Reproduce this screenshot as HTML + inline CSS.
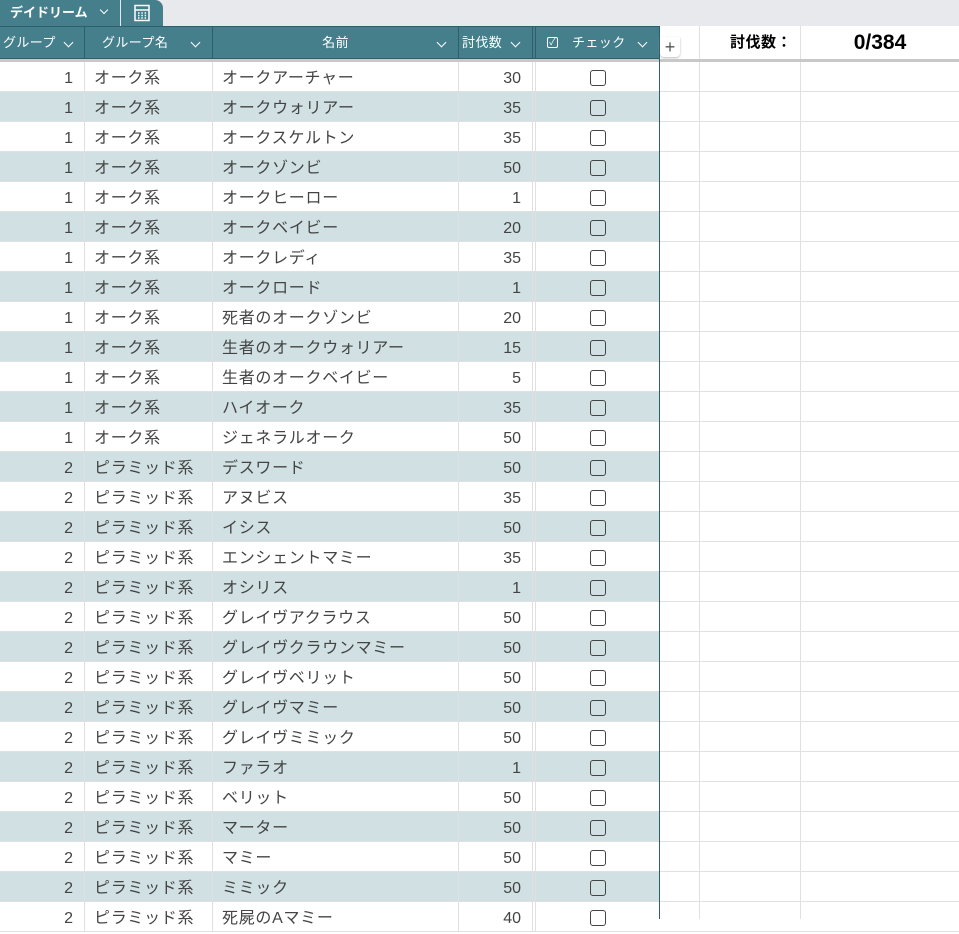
<!DOCTYPE html>
<html><head><meta charset="utf-8"><style>
*{margin:0;padding:0;box-sizing:border-box}
body{width:959px;height:919px;overflow:hidden;background:#fff;font-family:"Liberation Sans","Noto Sans CJK JP",sans-serif;position:relative}
.tabbar{position:absolute;left:0;top:0;width:959px;height:26px;background:#e8e9ed}
.tab{position:absolute;top:0;height:26px;background:#447f8b;color:#fff;font-size:13px;font-weight:bold;line-height:26px}
.hdr{position:absolute;top:26px;left:0;width:660px;height:33px;background:#457f8b;border-top:1px solid #2f5f6a;border-bottom:1px solid #2f5f6a}
.h{position:absolute;top:0;height:31px;line-height:31px;color:#fff;font-size:13px;border-right:1px solid #2f5f6a;letter-spacing:0.4px}
.chev{position:absolute;top:12px;width:7px;height:7px;border-right:1.6px solid #fff;border-bottom:1.6px solid #fff;transform:rotate(45deg)}
.sep{position:absolute;top:59px;left:0;width:959px;height:3px;background:#c8c8c8}
.row{position:absolute;left:0;width:660px;height:30px;border-bottom:1px solid #e0e0e0}
.row.alt{background:#d0e0e3}
.c{position:absolute;top:0;height:30px;padding-top:2px;line-height:30px;font-size:16px;color:#444;border-right:1px solid #e0e0e0;letter-spacing:0.7px;white-space:nowrap}
.n{letter-spacing:0}
.cb{position:absolute;left:590px;top:8px;width:16px;height:16px;border:1.8px solid #444;border-radius:3px}
.grid{position:absolute;left:660px;width:299px;height:30px;border-bottom:1px solid #e0e0e0}
</style></head><body>
<div class="tabbar"></div>
<div class="tab" style="left:0;width:120px;padding-left:10px">デイドリーム<span class="chev" style="left:101px;top:7px;width:6px;height:6px"></span></div>
<div class="tab" style="left:121px;width:42px;border-radius:0 8px 0 0">
<svg width="18" height="18" viewBox="0 0 18 18" style="position:absolute;left:12px;top:4px" fill="none" stroke="#fff" stroke-width="1.5"><rect x="2" y="1.5" width="14" height="15"/><line x1="2" y1="6" x2="16" y2="6"/><path d="M5 9h1.5M8.3 9h1.5M11.6 9h1.5M5 11.5h1.5M8.3 11.5h1.5M11.6 11.5h1.5M5 14h1.5M8.3 14h1.5M11.6 14h1.5"/></svg></div>
<div class="hdr">
<div class="h" style="left:0;width:85px;padding-left:3px">グループ<span class="chev" style="left:65px"></span></div>
<div class="h" style="left:85px;width:128px;padding-left:17px">グループ名<span class="chev" style="left:107px"></span></div>
<div class="h" style="left:213px;width:246px;text-align:center">名前<span class="chev" style="left:225px"></span></div>
<div class="h" style="left:459px;width:74px;padding-left:3px">討伐数<span class="chev" style="left:53px"></span></div>
<div class="h" style="left:533px;width:3px"></div>
<div class="h" style="left:536px;width:124px;padding-left:36px;border-right:none"><span style="position:absolute;left:11px;top:10px;width:11px;height:11px;border:1.3px solid #fff;border-radius:2px;font-size:9px;line-height:8px;text-align:center">✓</span>チェック<span class="chev" style="left:103px"></span></div>
</div>
<div style="position:absolute;left:660px;top:37px;width:20px;height:20px;background:#fff;border-radius:0 0 4px 4px;box-shadow:0 1px 2px #bbb;text-align:center;font-size:18px;line-height:20px;color:#555">+</div>
<div style="position:absolute;left:699px;top:26px;width:1px;height:893px;background:#e0e0e0"></div>
<div style="position:absolute;left:800px;top:26px;width:1px;height:893px;background:#e0e0e0"></div>
<div style="position:absolute;left:700px;top:26px;width:100px;height:33px;line-height:33px;text-align:right;padding-right:8px;font-size:15px;font-weight:bold;letter-spacing:0.5px">討伐数：</div>
<div style="position:absolute;left:801px;top:26px;width:158px;height:33px;line-height:33px;text-align:center;font-size:21px;font-weight:bold">0/384</div>
<div class="sep"></div>
<div id="rows"></div>
<div style="position:absolute;left:659px;top:26px;width:1px;height:893px;background:#2f5f6a"></div>
<script>
var d=[["1","オーク系","オークアーチャー","30"],["1","オーク系","オークウォリアー","35"],["1","オーク系","オークスケルトン","35"],["1","オーク系","オークゾンビ","50"],["1","オーク系","オークヒーロー","1"],["1","オーク系","オークベイビー","20"],["1","オーク系","オークレディ","35"],["1","オーク系","オークロード","1"],["1","オーク系","死者のオークゾンビ","20"],["1","オーク系","生者のオークウォリアー","15"],["1","オーク系","生者のオークベイビー","5"],["1","オーク系","ハイオーク","35"],["1","オーク系","ジェネラルオーク","50"],["2","ピラミッド系","デスワード","50"],["2","ピラミッド系","アヌビス","35"],["2","ピラミッド系","イシス","50"],["2","ピラミッド系","エンシェントマミー","35"],["2","ピラミッド系","オシリス","1"],["2","ピラミッド系","グレイヴアクラウス","50"],["2","ピラミッド系","グレイヴクラウンマミー","50"],["2","ピラミッド系","グレイヴベリット","50"],["2","ピラミッド系","グレイヴマミー","50"],["2","ピラミッド系","グレイヴミミック","50"],["2","ピラミッド系","ファラオ","1"],["2","ピラミッド系","ベリット","50"],["2","ピラミッド系","マーター","50"],["2","ピラミッド系","マミー","50"],["2","ピラミッド系","ミミック","50"],["2","ピラミッド系","死屍のAマミー","40"]];
var h="";
d.forEach(function(r,i){var t=62+i*30;
h+='<div class="row'+(i%2?' alt':'')+'" style="top:'+t+'px">'+
'<div class="c n" style="left:0;width:85px;text-align:right;padding-right:11px">'+r[0]+'</div>'+
'<div class="c" style="left:85px;width:128px;padding-left:9px">'+r[1]+'</div>'+
'<div class="c" style="left:213px;width:246px;padding-left:9px">'+r[2]+'</div>'+
'<div class="c n" style="left:459px;width:74px;text-align:right;padding-right:11px">'+r[3]+'</div>'+
'<div class="c" style="left:533px;width:3px"></div>'+
'<div class="cb"></div></div>'+
'<div class="grid" style="top:'+t+'px"></div>';});
document.getElementById("rows").innerHTML=h;
</script>
</body></html>
